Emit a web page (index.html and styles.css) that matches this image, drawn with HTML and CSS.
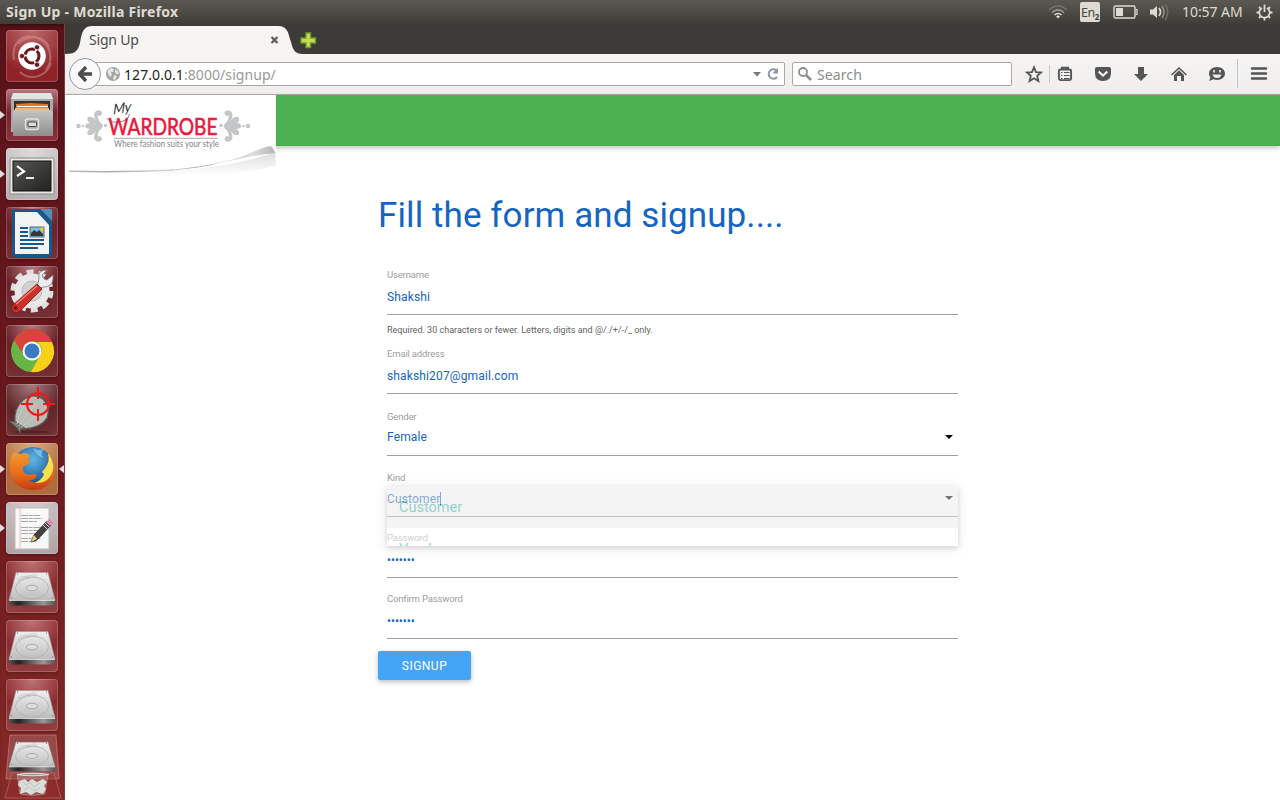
FILE: index.html
```html
<!DOCTYPE html>
<html lang="en">
<head>
<meta charset="utf-8">
<title>Sign Up</title>
<link rel="stylesheet" href="styles.css">
</head>
<body>
<svg class="defs" width="0" height="0">
  <defs>
    <linearGradient id="metal" x1="0" y1="0" x2="0" y2="1"><stop offset="0" stop-color="#efefef"/><stop offset="1" stop-color="#bdbdbd"/></linearGradient>
    <linearGradient id="edge" x1="0" y1="0" x2="1" y2="0"><stop offset="0" stop-color="#555"/><stop offset=".2" stop-color="#222"/><stop offset=".75" stop-color="#999"/><stop offset="1" stop-color="#555"/></linearGradient>
    <linearGradient id="cab" x1="0" y1="0" x2="0" y2="1"><stop offset="0" stop-color="#c4c4c2"/><stop offset="1" stop-color="#8e8e8c"/></linearGradient>
    <linearGradient id="screen" x1="0" y1="0" x2="1" y2="1"><stop offset="0" stop-color="#555752"/><stop offset="1" stop-color="#222"/></linearGradient>
    <linearGradient id="fox" x1="0" y1="0" x2="0" y2="1"><stop offset="0" stop-color="#f39a2d"/><stop offset=".6" stop-color="#e66a1c"/><stop offset="1" stop-color="#c33a12"/></linearGradient>
    <radialGradient id="globe" cx=".5" cy=".3" r=".7"><stop offset="0" stop-color="#5fb8ea"/><stop offset="1" stop-color="#123c7c"/></radialGradient>
    <linearGradient id="curl" x1="0" y1="0" x2="1" y2="0"><stop offset="0" stop-color="#c8c8c8"/><stop offset=".45" stop-color="#a8a8a8"/><stop offset=".8" stop-color="#dedede"/><stop offset="1" stop-color="#b5b5b5"/></linearGradient>
    <linearGradient id="fade" x1="0" y1="0" x2="0" y2="1"><stop offset="0" stop-color="#cfcfcf"/><stop offset="1" stop-color="#fff"/></linearGradient>
    <linearGradient id="line" x1="0" y1="0" x2="1" y2="0"><stop offset="0" stop-color="#bbb"/><stop offset=".4" stop-color="#aaa"/><stop offset="1" stop-color="#ddd"/></linearGradient>
    <symbol id="drive" viewBox="0 0 52 52" preserveAspectRatio="none">
      <path d="M10 11.500H42L49 39H3Z" fill="url(#metal)" stroke="#999" stroke-width=".6"/>
      <path d="M3 39H49V44.500H4Z" fill="url(#edge)"/>
      <path d="M3 39.300H49" stroke="#eee" stroke-width="1"/>
      <ellipse cx="26" cy="27" rx="16.500" ry="11" fill="none" stroke="#b1b1b1" stroke-width=".9"/>
      <ellipse cx="26" cy="27" rx="5.700" ry="2.700" fill="#ddd" stroke="#aaa"/>
      <path d="M12 20C14 13 24 17 29 13M13 23C17 15 26 19 31 14" fill="none" stroke="#bcbcbc" stroke-width=".8"/>
      <path d="M11 13h1M40 13h1M5 37h1M46 37h1" stroke="#777"/>
    </symbol>
  </defs>
</svg>

<div class="desktop">
  <header class="panel">
    <span class="panel-title">Sign Up - Mozilla Firefox</span>
    <div class="indicators">
      <svg class="wifi" width="20" height="14" viewBox="0 0 20 14" fill="none"><path d="M1 5Q10-3 19 5" stroke="#77756f" stroke-width="1.500"/><path d="M4 7.600Q10 2.200 16 7.600" stroke="#9c9a92" stroke-width="1.500"/><path d="M6.500 10Q10 7 13.500 10" stroke="#dfdbd2" stroke-width="1.600"/><path d="M8 11.500Q10 9.700 12 11.500L10 13.500Z" fill="#dfdbd2"/></svg>
      <span class="keyboard">En<sub>2</sub></span>
      <svg class="battery" width="25" height="14" viewBox="0 0 25 14"><rect x="1" y="1" width="21" height="12" rx="1.500" fill="none" stroke="#dfdbd2" stroke-width="1.400"/><path d="M3 3h7v8H3Z" fill="#dfdbd2"/><path d="M22.500 4.500h1.500v5h-1.500" fill="none" stroke="#dfdbd2" stroke-width="1.200"/></svg>
      <svg class="volume" width="21" height="18" viewBox="0 0 21 18" fill="none"><path d="M1 6.500H4L8 3V15L4 11.500H1Z" fill="#dfdbd2"/><path d="M10 5Q13 9 10 13" stroke="#dfdbd2" stroke-width="1.700"/><path d="M13 3Q17 9 13 15" stroke="#96938b" stroke-width="1.500"/><path d="M16 1Q21.500 9 16 17" stroke="#706e67" stroke-width="1.500"/></svg>
      <span class="clock">10:57 AM</span>
      <svg class="gear" width="17" height="17" viewBox="0 0 17 17" fill="none" stroke="#dfdbd2"><path d="M6 3.900A5.200 5.200 0 1 0 11 3.900" stroke-width="1.700"/><path d="M8.500 .5V8" stroke-width="1.800"/><path d="M3 3l1.800 1.800M14 3l-1.800 1.800M.5 8.500H3M14 8.500h2.500M3 14l1.800-1.800M14 14l-1.800-1.800M8.500 14v2.500" stroke-width="1.800"/></svg>
    </div>
  </header>

  <div class="workspace">
    <nav class="launcher">
      <div class="tile tile-dash"><svg viewBox="0 0 52 52"><path d="M8 30C5 13 16 3 31 8 45 13 48 30 40 40M14 42C25 52 41 46 45 33M12 14C22 4 38 5 43 17" fill="none" stroke="#dba2a6" stroke-width="2" opacity=".45"/><circle cx="26" cy="26" r="13.800" fill="#fff"/><circle cx="26" cy="26" r="7" fill="none" stroke="#6b171d" stroke-width="3" stroke-dasharray="12.800 1.860" stroke-dashoffset="6"/><g fill="#6b171d" stroke="#fff" stroke-width=".7"><circle cx="16" cy="26" r="2.600"/><circle cx="31" cy="17.300" r="2.600"/><circle cx="31" cy="34.700" r="2.600"/></g></svg></div>
      <div class="tile tile-files"><i class="run"></i><svg viewBox="0 0 52 52"><path d="M7 4H45L47 10V43H5V10Z" fill="#a9a9a7"/><path d="M7 4H45L47 10H5Z" fill="#e2e2e2"/><path d="M8 12H44V24H8Z" fill="#333"/><path d="M10 15L24 14 42 15V22H10Z" fill="#df7927"/><path d="M9 19H43V22H9Z" fill="#f2b470"/><path d="M11 17.500H42" stroke="#fff" stroke-width="1"/><path d="M8 21H44L47 23V47H7V23Z" fill="url(#cab)"/><rect x="19.500" y="30" width="13" height="10.500" rx="2" fill="#aaa" stroke="#e4e4e4" stroke-width="1.300"/><rect x="22" y="33" width="8.500" height="4.500" rx="1" fill="#ddd" stroke="#444"/></svg></div>
      <div class="tile tile-terminal"><i class="run"></i><svg viewBox="0 0 52 52"><rect x="4" y="10" width="44" height="36" rx="1.500" fill="#e8e8e5" stroke="#858583"/><rect x="7" y="13" width="38" height="30" fill="url(#screen)" stroke="#111"/><path d="M11 18L18 23.500 11 28" fill="none" stroke="#fff" stroke-width="2.200"/><path d="M20 30H28" stroke="#fff" stroke-width="1.800"/></svg></div>
      <div class="tile tile-dark"><svg viewBox="0 0 52 52"><path d="M8 2H34L46 14V48Q46 50 44 50H8Q6 50 6 48V4Q6 2 8 2Z" fill="#165889"/><path d="M9 5H31L43 18V47H9Z" fill="#f3f3f3"/><path d="M35 2H44Q46 2 46 4V14Z" fill="#4a93bd"/><g stroke="#165889" stroke-width="1.800"><path d="M14 21H22M14 25H22M14 29H22M14 33H38M14 37H38M14 41H32"/></g><rect x="24" y="20" width="14" height="10" fill="#83c0e4" stroke="#333" stroke-width=".7"/><path d="M25 29V26L28 23 31 25 33 23 37 27V29Z" fill="#303a3c"/><circle cx="36" cy="22" r="1.800" fill="#f1c62b"/></svg></div>
      <div class="tile tile-dark"><svg viewBox="0 0 52 52"><circle cx="26" cy="25" r="19" fill="none" stroke="#dedede" stroke-width="5" stroke-dasharray="7 4.940"/><circle cx="26" cy="25" r="17.500" fill="#e8e8e8"/><circle cx="26" cy="25" r="10" fill="#d1d1d1" stroke="#bbb"/><path d="M31 21L28 28 34 22 38 21Q46 21 47 13L47 9 41 14 38 13 36 9 41 4Q31 4 33 13Z" fill="#eee" stroke="#777" stroke-width=".8"/><path d="M31 18L36 23 13 46Q8 48 6 44 4 41 8 38Z" fill="#cb302a" stroke="#821613" stroke-width=".8"/><path d="M10 38L31 20" stroke="#ee817b" stroke-width="1.500"/><circle cx="9.500" cy="42" r="2" fill="#7c1614"/></svg></div>
      <div class="tile tile-dark"><svg viewBox="0 0 52 52"><circle cx="26" cy="26" r="21" fill="#67b546"/><path d="M8 15A21 21 0 0 1 46 17H26L17 29Z" fill="#d9443b"/><path d="M46 17A21 21 0 0 1 25 47L35 29Q38 22 31 17Z" fill="#f7d117"/><circle cx="26" cy="26" r="9.500" fill="#fff"/><circle cx="26" cy="26" r="7.500" fill="#3a7abf"/></svg></div>
      <div class="tile tile-grey"><svg viewBox="0 0 52 52"><ellipse cx="26" cy="48" rx="18" ry="1.500" fill="#3c171c" opacity=".5"/><path d="M9 39Q7 25 17 16 27 8 37 15 45 23 41 34 36 43 19 45Z" fill="#b9bcb4" stroke="#555a54" stroke-width="1.300"/><path d="M10 38L3 37 11 44 14 49 15 45 20 45Z" fill="#7d827a" stroke="#50554e"/><path d="M11 40Q14 25 24 14M13 42Q20 30 30 20M15 43Q24 38 34 27" fill="none" stroke="#c9ccc4" stroke-width="1"/><g stroke="#f01818" stroke-width="2" fill="none"><circle cx="32" cy="20" r="11"/><path d="M32 3V15M32 25V37M15 20H27M37 20H49"/></g></svg></div>
      <div class="tile tile-firefox"><i class="run"></i><i class="active"></i><svg viewBox="0 0 52 52"><circle cx="27" cy="25" r="21" fill="url(#globe)"/><path d="M27 5Q34 9 38 5 33 12 38 15 30 13 27 5Z" fill="#8bd1f2" opacity=".65"/><path d="M8 9Q12 11 15 11 20 8 24 13L22 16 24 20 17 24Q16 31 24 32 29 29 31 33 26 39 21 37 33 43 40 34 47 27 42 10 50 20 48 29 45 47 27 47 5 46 4 25 3 16 8 9Z" fill="url(#fox)"/><path d="M42 10Q44 18 40 24L36 29 38 31Q36 37 29 40 43 41 47 27 48 18 42 10Z" fill="#fae04a"/></svg></div>
      <div class="tile tile-editor"><i class="run"></i><svg viewBox="0 0 52 52"><path d="M9 6H43V47H9Z" fill="#f8f8f8" stroke="#bbb"/><path d="M14 6V47" stroke="#f3a8a8" stroke-width=".8"/><g stroke="#a7a7a7" stroke-width="1" stroke-dasharray="7 .8 4 .7"><path d="M15 13.500H34M15 16.500H36M15 19.500H31M15 25.500H35M15 28.500H37M15 31.500H31M15 36.500H35M15 39.500H30"/></g><path d="M25 40L28 33 41 19 45 23 31 38Z" fill="#40443c" stroke="#222" stroke-width=".8"/><path d="M25 40L28 33 31 37Z" fill="#ead18a"/><path d="M40 20L43 17Q46 18 47 21L44 24Z" fill="#d98eb0"/><path d="M39 21L43 25M37 23L41 27" stroke="#ddd"/></svg></div>
      <div class="tile tile-drive"><svg><use href="#drive"/></svg></div>
      <div class="tile tile-drive"><svg><use href="#drive"/></svg></div>
      <div class="tile tile-drive"><svg><use href="#drive"/></svg></div>
      <svg class="folded" width="58" height="66" viewBox="0 0 58 66"><path d="M6 1H52L55 45H2Z" fill="#fff" fill-opacity=".16" stroke="#df9a9a" stroke-opacity=".5"/><use href="#drive" x="2" y="-2" width="52" height="46"/><path d="M8 39H50L57 64H1Z" fill="#9b3030" fill-opacity=".35" stroke="#d27b7b" stroke-opacity=".5"/><path d="M13 41Q29 37 44 41L41 60Q29 63 16 60Z" fill="#ddd" fill-opacity=".25" stroke="#ccc" stroke-opacity=".35"/><path d="M15 47L21 45 24 48 28 45 33 48 39 45 43 48 40 52 42 55 39 60 32 58 27 61 22 58 16 60 17 54 14 51Z" fill="#d9ddda"/><path d="M19 48l3 3 4-3 4 5 6-4M20 56l5-3 5 4 6-3" fill="none" stroke="#b9beba" stroke-width=".8"/><path d="M13 40.500Q29 38 45 40.500 29 43 13 40.500Z" fill="#999" stroke="#ddd" stroke-width="1.200"/></svg>
    </nav>

    <main class="browser">
      <div class="tabs">
        <svg class="tab-shape" width="255" height="30" viewBox="65 24 255 30"><path d="M65 54C75 54 78 51 80 43 82 32 83 26 93 26H278C288 26 288 33 291 42 293 51 296 54 303 54Z" fill="#f6f5f4"/><path d="M271.500 37L277.500 43M277.500 37L271.500 43" stroke="#5b5b5b" stroke-width="2.200"/><path d="M306 33H310.500V38H315.500V43H310.500V47.500H306V43H301V38H306Z" fill="#c9db54" stroke="#6d9e27" stroke-width="1.300"/></svg>
        <span class="tab-label">Sign Up</span>
      </div>
      <div class="toolbar">
        <div class="back"><svg width="15" height="16" viewBox="0 0 15 16"><path d="M8 1L1.500 8 8 15M2 8H14" fill="none" stroke="#4c4c4c" stroke-width="3.400"/></svg></div>
        <div class="address">
          <svg width="14" height="14" viewBox="0 0 14 14"><circle cx="7" cy="7" r="7" fill="#a3a3a3"/><path d="M2 3L5 1 8 2 7 5 5 5 6 8 4 10 2 7ZM9 2L12 4 13 7 10 7 9 5ZM8 8L11 9 9 13 7 12Z" fill="#e7e7e7"/></svg>
          <span class="url"><b>127.0.0.1</b>:8000/signup/</span>
          <svg class="reload" width="26" height="14" viewBox="0 0 26 14"><path d="M0 5H8L4 9.500Z" fill="#777"/><path d="M23.500 3.400A4.700 4.700 0 1 0 24 10" fill="none" stroke="#8b98a8" stroke-width="2"/><path d="M25 .8V6.500H19.500Z" fill="#8b98a8"/></svg>
        </div>
        <div class="search"><svg width="14" height="14" viewBox="0 0 14 14" fill="none" stroke="#8d8d8d"><circle cx="5" cy="5" r="4" stroke-width="1.800"/><path d="M8 8L13 13" stroke-width="2.500"/></svg><span>Search</span></div>
        <svg class="tools" width="268" height="40" viewBox="1012 54 268 40" fill="none" stroke="#555">
          <path d="M1034 67.400L1036 72.200 1041 72.500 1037.200 75.800 1038.400 81 1034 78.200 1029.600 81 1030.800 75.800 1027 72.500 1032 72.200Z" stroke-width="1.800"/>
          <path d="M1049.500 65V83" stroke="#c5cad0"/><rect x="1058.900" y="69.500" width="12.200" height="10.600" rx="1.500" stroke-width="1.900"/><path d="M1062 69V67.800H1068V69" stroke-width="2"/><path d="M1064 72.500H1069.500M1064 75.500H1069.500M1064 78.500H1069.500M1061 72.500H1062.500M1061 75.500H1062.500M1061 78.500H1062.500" stroke-width="1"/>
          <path d="M1095 68.500Q1095 67 1097 67H1109Q1111 67 1111 68.500V73Q1111 81 1103 81 1095 81 1095 73Z" fill="#555" stroke="none"/><path d="M1098.700 71.500L1103 75.700 1107.300 71.500" stroke="#fff" stroke-width="2"/>
          <path d="M1138 67H1144V74H1148L1141 81 1134 74H1138Z" fill="#555" stroke="none"/>
          <path d="M1171.500 75L1179 68 1186.500 75" stroke-width="1.600"/><path d="M1174 75L1179 70.300 1184 75V81H1181V76H1177V81H1174Z" fill="#555" stroke="none"/>
          <path d="M1217 67C1222 67 1225 70 1225 73.600S1222 80 1217 80Q1215 80 1213.500 79.300L1209 81 1210.500 77.500Q1209 76 1209 73.500C1209 70 1212 67 1217 67Z" fill="#555" stroke="none"/><path d="M1212.500 74.500H1221.500Q1220.500 78 1217 78T1212.500 74.500Z" fill="#eee" stroke="none"/><path d="M1214 70V72.500M1220 70V72.500" stroke="#eee" stroke-width="1.700"/>
          <path d="M1237.500 59V88" stroke="#bfc6ce"/><path d="M1252 68.500H1266M1252 73.500H1266M1252 78.500H1266" stroke-width="2.500" stroke-linecap="round"/>
        </svg>
      </div>

      <section class="page">
        <div class="navbar">
          <svg class="logo" width="211" height="85" viewBox="1 5 211 85">
            <path d="M1 5H212V85H1Z" fill="#fff"/>
            <path d="M95 81Q160 80 211.500 62V76Q160 88 95 85Z" fill="url(#fade)" opacity=".7"/>
            <path d="M5 81.300Q60 82.500 110 80" fill="none" stroke="url(#line)" stroke-width="1.500"/>
            <path d="M95 81Q160 75 182 65 200 56.500 207 56 209 58 211.500 63 190 65 160 72 130 80 95 81Z" fill="url(#curl)"/>
            <g id="ornament" fill="#c4c6c8"><circle cx="14.500" cy="36" r="2.300"/><circle cx="19" cy="36" r="1.300"/><path d="M21 36Q22 33 26 33 22 31 24 27 29 26 32 31 28 24 32 21 36 19 38 22 38 26 35 26 33 24 34 28 35 32 38 34L39 36 38 38Q35 40 34 44 33 48 35 46 38 46 38 50 36 53 32 51 28 48 32 41 29 46 24 45 22 41 26 39 22 39 21 36Z"/><circle cx="41.500" cy="35.500" r="1.700"/></g>
            <use href="#ornament" transform="translate(198.500 0) scale(-1 1)"/>
            <text class="logo-my" transform="translate(49 24.500) rotate(-10) skewX(-12)">My</text>
            <path d="M43 28.500Q46 33 55 32 64 31 65.500 24" fill="none" stroke="#666" stroke-width=".8"/>
            <text class="logo-name" x="44.500" y="45" textLength="109" lengthAdjust="spacingAndGlyphs">WARDROBE</text>
            <path d="M50 48.300H154" stroke="#aaa"/>
            <text class="logo-tag" x="50" y="56.500" textLength="105" lengthAdjust="spacingAndGlyphs">Where fashion suits your style</text>
          </svg>
        </div>
        <form class="signup">
          <h1>Fill the form and signup....</h1>
          <div class="field"><label>Username</label><div class="value">Shakshi</div></div>
          <p class="help">Required. 30 characters or fewer. Letters, digits and @/./+/-/_ only.</p>
          <div class="field email"><label>Email address</label><div class="value">shakshi207@gmail.com</div></div>
          <div class="field gender"><label>Gender</label><div class="value">Female<i class="caret"></i></div></div>
          <div class="field kind"><label>Kind</label><div class="value"><span class="typing">Customer</span><i class="caret"></i></div>
            <ul class="options"><li class="selected">Customer</li><li>Vendor</li></ul>
          </div>
          <div class="field"><label>Password</label><div class="value dots">•••••••</div></div>
          <div class="field"><label>Confirm Password</label><div class="value dots">•••••••</div></div>
          <button type="button">SIGNUP</button>
        </form>
      </section>
    </main>
  </div>
</div>
</body>
</html>
```

FILE: styles.css
```css
* { box-sizing: border-box; }
body { margin: 0; width: 1280px; height: 800px; overflow: hidden; font-family: Roboto, sans-serif; background: #fff; }
svg { display: block; flex: none; }
.defs { position: absolute; }
.desktop { display: flex; flex-direction: column; height: 800px; }

/* Top panel */
.panel { flex: none; height: 24px; display: flex; align-items: center; justify-content: space-between; padding: 0 7px 0 6px; background: linear-gradient(#5b5952, #3e3d39); color: #dfdbd2; font-family: "Noto Sans", sans-serif; }
.panel-title { font-size: 14px; font-weight: 700; letter-spacing: .25px; line-height: 20px; }
.indicators { display: flex; align-items: center; }
.keyboard { width: 20px; height: 20px; margin: 0 13px 0 12px; border-radius: 2px; background: #dfdbd2; color: #45443f; font-size: 12.500px; line-height: 21px; white-space: nowrap; padding-left: 1px; letter-spacing: -.5px; }
.keyboard sub { font-size: 8px; line-height: 0; vertical-align: -3px; font-weight: 700; }
.volume { margin: 0 12px 0 11px; }
.clock { font-size: 14px; line-height: 20px; margin-top: -1px; width: 62px; white-space: nowrap; letter-spacing: -.05px; }
.gear { margin-left: 12px; }

/* Launcher */
.workspace { flex: 1; display: flex; min-height: 0; }
.launcher { flex: none; width: 65px; padding: 6px 0 0 6px; display: flex; flex-direction: column; gap: 7px; background: linear-gradient(#5a131a, #6c191e 55%, #862a27); border-right: 1px solid #8a3c40; box-shadow: inset 0 4px 4px -3px #2a080b; }
.tile { flex: none; position: relative; width: 52px; height: 52px; border-radius: 4px; box-shadow: inset 0 0 0 1px rgba(255,255,255,.2), 0 1px 3px rgba(0,0,0,.3); }
.tile svg { width: 52px; height: 52px; }
.tile-dash { background: radial-gradient(circle at 50% 0, #ba696b, #8f2327 75%); }
.tile-files { background: linear-gradient(#b77780, #77202b 45%, #8d323c); }
.tile-terminal { background: radial-gradient(circle at 50% 0, #e0dcdc, #b5aaad); }
.tile-dark { background: radial-gradient(circle at 50% 0, #b27b80, #692127 50%, #793338); }
.tile-grey { background: radial-gradient(circle at 50% 0, #a47c7f, #60252a 55%, #743438); }
.tile-firefox { background: radial-gradient(circle at 50% 0, #d7ad80, #b16c3e 65%); }
.tile-editor { background: radial-gradient(circle at 50% 0, #d4cccd, #aea0a3); }
.tile-drive { background: radial-gradient(circle at 50% 0, #c07376, #8a2c2f 55%, #944143); }
.run, .active { position: absolute; top: 22px; border: 4px solid transparent; }
.run { left: -6px; border-left: 5px solid #ddd; border-right: 0; }
.active { right: -6px; border-right: 5px solid #ddd; border-left: 0; }
.folded { margin: -4px 0 0 -2px; }

/* Browser chrome */
.browser { flex: 1; display: flex; flex-direction: column; min-width: 0; font-family: "Noto Sans", sans-serif; }
.tabs { flex: none; height: 30px; position: relative; background: #3c3b37; }
.tab-label { position: absolute; left: 24px; top: 6px; font-size: 14px; line-height: 20px; color: #4c4c4c; letter-spacing: -.2px; }
.toolbar { flex: none; height: 41px; display: flex; align-items: center; background: linear-gradient(#f6f5f4, #efeeed); border-bottom: 1px solid #b4b0aa; }
.back { position: relative; z-index: 1; flex: none; width: 32px; height: 32px; margin-left: 4px; border: 1px solid #8f9aa8; border-radius: 50%; background: #fafafa; display: flex; align-items: center; justify-content: center; }
.address { width: 690px; height: 24px; margin-left: -6px; padding: 0 5px 0 10px; display: flex; align-items: center; background: #fff; border: 1px solid #aba9a6; border-radius: 0 2px 2px 0; font-size: 14px; }
.url { margin-left: 4px; color: #999; letter-spacing: .07px; }
.url b { font-weight: 400; color: #222; }
.reload { margin-left: auto; }
.search { width: 220px; height: 24px; margin-left: 7px; padding-left: 5px; display: flex; align-items: center; gap: 5px; background: #fff; border: 1px solid #aba9a6; border-radius: 2px; font-size: 14px; color: #8c8c8c; letter-spacing: .1px; }

/* Page */
.page { flex: 1; background: #fff; font-family: Roboto, sans-serif; }
.navbar { height: 51px; background: #4caf50; box-shadow: 0 2px 5px rgba(0,0,0,.24); }
.logo { position: relative; }
.logo-my { font: italic 400 14px Lato, sans-serif; fill: #333; letter-spacing: -.3px; }
.logo-name { font: 400 23px Lato, sans-serif; fill: #ee163d; stroke: #ee163d; stroke-width: .6px; }
.logo-tag { font: 8.500px Lato, sans-serif; fill: #858585; }
.signup { width: 589px; margin-left: 313px; padding-top: 44px; }
h1 { margin: 0; height: 78px; font-size: 35px; line-height: 52px; letter-spacing: .09px; font-weight: 400; color: #1565c0; white-space: nowrap; }
.field { position: relative; width: 571px; height: 47px; margin-left: 9px; border-bottom: 1px solid #9e9e9e; }
.field + .field { margin-top: 14px; }
label { display: block; height: 13px; line-height: 13px; font-size: 9.600px; letter-spacing: -.22px; color: #9e9e9e; }
.value { height: 31px; line-height: 33px; font-size: 12px; letter-spacing: .14px; color: #1565c0; }
.help { height: 32px; margin: 0 0 0 9px; line-height: 31px; font-size: 9px; letter-spacing: .01px; color: #616161; }
.field.gender { margin-top: 16px; height: 46px; }
.gender .value { line-height: 29px; }
.field.kind { margin-top: 15px; height: 46px; }
.kind .value { line-height: 31px; }
.caret { position: absolute; right: 5px; top: 25px; border: 4px solid transparent; border-top-color: #000; border-bottom: 0; }
.typing { border-right: 1px solid #1565c0; }
.options { position: absolute; left: 0; top: 15px; z-index: 2; width: 571px; height: 60px; margin: 0; padding: 0; overflow: hidden; list-style: none; background: #fff; opacity: .5; box-shadow: 0 2px 5px rgba(0,0,0,.26), 0 2px 10px rgba(0,0,0,.16); font-size: 14.500px; color: #26a69a; }
.options li { height: 42px; line-height: 44px; padding-left: 12px; }
.options .selected { background: #ebebeb; }
.dots { font-size: 12px; letter-spacing: -.1px; }
button { display: block; width: 93px; height: 29px; margin-top: 12px; padding: 0; border: 0; border-radius: 2px; background: #42a5f5; color: #fff; font: 12px Roboto, sans-serif; letter-spacing: .5px; box-shadow: 0 2px 5px rgba(0,0,0,.26); }
```
